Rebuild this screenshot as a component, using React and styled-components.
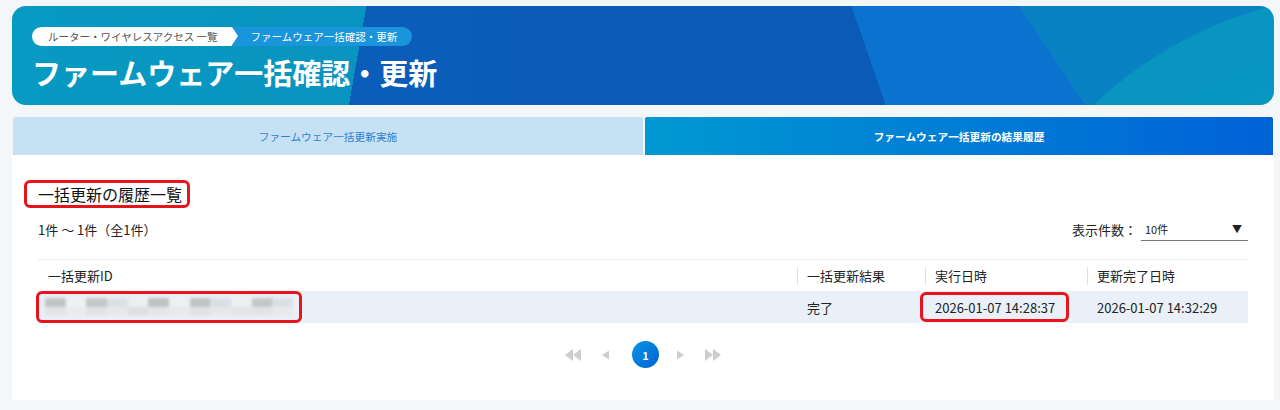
import React from "react";
import styled, { createGlobalStyle } from "styled-components";

const GlobalStyle = createGlobalStyle`
  html, body {
    margin: 0;
    padding: 0;
    background: #f3f7fa;
  }
  body {
    font-family: "Noto Sans CJK JP", "Noto Sans", sans-serif;
    color: #222;
  }
`;

const Page = styled.div`
  display: flex;
  flex-direction: column;
  padding: 6px 6px 9px 12px;
`;

const Hero = styled.div`
  height: 99px;
  box-sizing: border-box;
  border-radius: 14px;
  padding: 21px 20px 0;
  display: flex;
  flex-direction: column;
  gap: 6px;
  background:
    linear-gradient(100deg, #079ac2 0px, #0894be 349px, transparent 349px),
    radial-gradient(circle at 1360px 390px, #0899c0 0px, #0896c0 402px, transparent 403px),
    linear-gradient(56deg, transparent 890px, #0982c4 890px),
    linear-gradient(71deg, transparent 826px, #0b72cf 826px),
    linear-gradient(90deg, #0a5fb8 0%, #0a58b8 100%);
`;

const Crumbs = styled.div`
  display: flex;
  align-items: center;
  height: 19px;
`;

const Crumb = styled.div`
  position: relative;
  height: 19px;
  display: flex;
  align-items: center;
  font-size: 10.5px;
  white-space: nowrap;
  background: ${({ $current }) => ($current ? "#1a94da" : "#fff")};
  color: ${({ $current }) => ($current ? "#fff" : "#555")};
  padding: ${({ $current }) => ($current ? "0 15px 0 19px" : "0 14px 0 16px")};
  border-radius: ${({ $current }) => ($current ? "0 10px 10px 0" : "10px 0 0 10px")};
  z-index: ${({ $current }) => ($current ? 0 : 1)};

  &::after {
    content: "";
    display: ${({ $current }) => ($current ? "none" : "block")};
    position: absolute;
    right: -6px;
    top: 0;
    border-top: 9.5px solid transparent;
    border-bottom: 9.5px solid transparent;
    border-left: 6px solid #fff;
  }
`;

const Title = styled.h1`
  margin: 0;
  font-size: 29px;
  font-weight: 700;
  color: #fff;
  line-height: 40px;
`;

const Tabs = styled.div`
  display: grid;
  grid-template-columns: 630px 1fr;
  gap: 2px;
  margin: 12px 1px 0;
  height: 38px;
`;

const Tab = styled.div`
  display: flex;
  align-items: center;
  justify-content: center;
  font-size: 10.7px;
  border-radius: 2px 2px 0 0;
  background: ${({ $active }) =>
    $active ? "linear-gradient(90deg, #0099d2, #0062d8)" : "#c6e1f4"};
  color: ${({ $active }) => ($active ? "#fff" : "#2f7fd0")};
  font-weight: ${({ $active }) => ($active ? 700 : 400)};
`;

const Card = styled.div`
  background: #fff;
  padding: 25px 26px 32px;
  display: flex;
  flex-direction: column;
`;

const Heading = styled.h2`
  align-self: flex-start;
  margin: 0 0 0 -14px;
  padding: 0 5px 0 11px;
  height: 22px;
  display: flex;
  align-items: center;
  font-size: 16px;
  font-weight: 400;
  color: #111;
  border: 3px solid #e8141c;
  border-radius: 6px;
`;

const Toolbar = styled.div`
  display: flex;
  align-items: center;
  justify-content: space-between;
  margin-top: 9px;
  height: 24px;
  font-size: 13px;
`;

const PerPage = styled.div`
  display: flex;
  align-items: center;
`;

const Select = styled.div`
  width: 107px;
  height: 24px;
  box-sizing: border-box;
  margin-left: 4px;
  padding: 0 6px 0 4px;
  display: flex;
  align-items: center;
  justify-content: space-between;
  font-size: 11px;
  border-bottom: 1px solid #777;
  color: #222;
`;

const Caret = styled.span`
  font-size: 10px;
  color: #222;
`;

const Table = styled.div`
  margin-top: 18px;
  border-top: 1px solid #e6ebf0;
  display: grid;
  grid-template-columns: 759px 128px 162px 161px;
  font-size: 13px;
`;

const HeadCell = styled.div`
  height: 31px;
  display: flex;
  align-items: center;
  padding-left: 10px;
  position: relative;
  color: #222;

  &::before {
    content: "";
    display: ${({ $first }) => ($first ? "none" : "block")};
    position: absolute;
    left: 0;
    top: 7px;
    height: 18px;
    border-left: 1px solid #dde2e8;
  }
`;

const Cell = styled.div`
  height: 32px;
  display: flex;
  align-items: center;
  padding-left: ${({ $flush }) => ($flush ? "0" : "10px")};
  background: #e9f0f7;
  color: #222;
`;

const Mark = styled.div`
  display: flex;
  align-items: center;
  box-sizing: border-box;
  border: 3px solid #e8141c;
  border-radius: 6px;
  margin-left: ${({ $shift }) => $shift};
  padding: ${({ $pad }) => $pad};
  height: ${({ $h }) => $h};
`;

const Blurred = styled.div`
  display: grid;
  grid-template-columns: repeat(12, 1fr);
  grid-template-rows: 9px 9px;
  width: 248px;
  filter: blur(1.4px);
  opacity: 0.8;
`;

const Blot = styled.div`
  background: ${({ $c }) => $c};
`;

const Pager = styled.div`
  display: flex;
  align-items: center;
  justify-content: center;
  gap: 14px;
  margin-top: 18px;
`;

const PagerIcon = styled.svg`
  width: 18px;
  height: 14px;
  fill: #cdcdcd;
`;

const PageNum = styled.div`
  width: 27px;
  height: 27px;
  border-radius: 50%;
  background: linear-gradient(135deg, #0a94e2, #0062d6);
  color: #fff;
  font-size: 11px;
  font-weight: 700;
  display: flex;
  align-items: center;
  justify-content: center;
  margin: 0 -1px 0 4px;
`;

const blots = [
  "#b9b9b9", "#f2f2f2", "#bdbdbd", "#d8dde3", "#eeeeee", "#b6b6b6",
  "#f0f0f0", "#b8b8b8", "#d6dbe1", "#eeeeee", "#bcbcbc", "#d9dde2",
  "#e2e2e2", "#eaeaea", "#e0e0e0", "#e6e6e6", "#dcdcdc", "#e4e4e4",
  "#e8e8e8", "#dedede", "#e6e6e6", "#e2e2e2", "#e0e0e0", "#e8e8e8",
];

const DoubleLeft = () => (
  <PagerIcon viewBox="0 0 18 14">
    <polygon points="9,1 9,13 1,7" />
    <polygon points="17,1 17,13 9,7" />
  </PagerIcon>
);

const DoubleRight = () => (
  <PagerIcon viewBox="0 0 18 14">
    <polygon points="1,1 1,13 9,7" />
    <polygon points="9,1 9,13 17,7" />
  </PagerIcon>
);

const Left = () => (
  <PagerIcon viewBox="0 0 18 14">
    <polygon points="13,2.5 13,11.5 6,7" />
  </PagerIcon>
);

const Right = () => (
  <PagerIcon viewBox="0 0 18 14">
    <polygon points="5,2.5 5,11.5 12,7" />
  </PagerIcon>
);

export default function App() {
  return (
    <>
      <GlobalStyle />
      <Page>
        <Hero>
          <Crumbs>
            <Crumb>ルーター・ワイヤレスアクセス 一覧</Crumb>
            <Crumb $current>ファームウェア一括確認・更新</Crumb>
          </Crumbs>
          <Title>ファームウェア一括確認・更新</Title>
        </Hero>
        <Tabs>
          <Tab>ファームウェア一括更新実施</Tab>
          <Tab $active>ファームウェア一括更新の結果履歴</Tab>
        </Tabs>
        <Card>
          <Heading>一括更新の履歴一覧</Heading>
          <Toolbar>
            <span>1件 ～ 1件（全1件）</span>
            <PerPage>
              表示件数：
              <Select>
                <span>10件</span>
                <Caret>▼</Caret>
              </Select>
            </PerPage>
          </Toolbar>
          <Table>
            <HeadCell $first>一括更新ID</HeadCell>
            <HeadCell>一括更新結果</HeadCell>
            <HeadCell>実行日時</HeadCell>
            <HeadCell>更新完了日時</HeadCell>
            <Cell $flush>
              <Mark $shift="-2px" $pad="0 6px" $h="32px">
                <Blurred>
                  {blots.map((c, i) => (
                    <Blot key={i} $c={c} />
                  ))}
                </Blurred>
              </Mark>
            </Cell>
            <Cell>完了</Cell>
            <Cell>
              <Mark $shift="-15px" $pad="0 11px 0 12px" $h="30px">
                2026-01-07 14:28:37
              </Mark>
            </Cell>
            <Cell>2026-01-07 14:32:29</Cell>
          </Table>
          <Pager>
            <DoubleLeft />
            <Left />
            <PageNum>1</PageNum>
            <Right />
            <DoubleRight />
          </Pager>
        </Card>
      </Page>
    </>
  );
}
